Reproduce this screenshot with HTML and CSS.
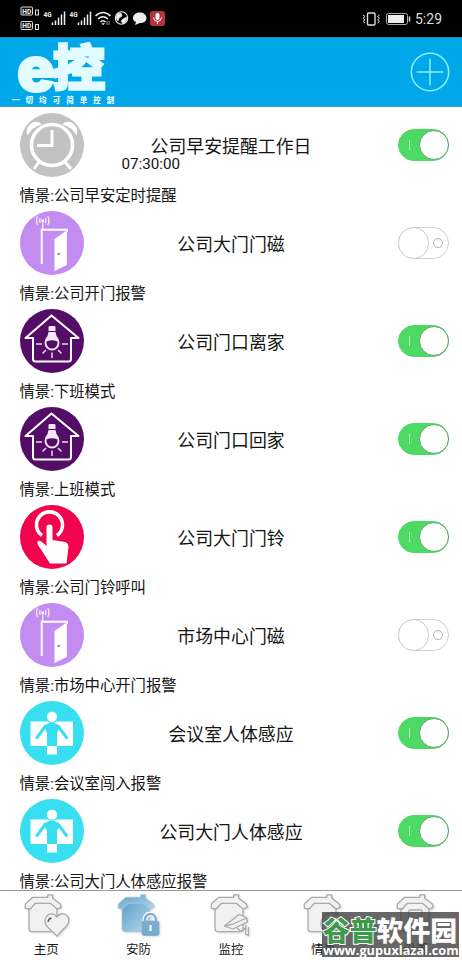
FILE: index.html
```html
<!DOCTYPE html>
<html lang="zh-CN">
<head>
<meta charset="utf-8">
<title>e控</title>
<link rel="stylesheet" href="styles.css">
</head>
<body>
<svg class="defs" width="0" height="0" aria-hidden="true">
  <defs>
    <linearGradient id="blue" x1="0" y1="0" x2="1" y2="1"><stop offset="0" stop-color="#5d9fc9"/><stop offset="1" stop-color="#b9d9eb"/></linearGradient>
    <symbol id="clock" viewBox="0 0 64 64">
      <circle cx="32" cy="32" r="32" fill="#c2c2c2"/>
      <path d="M7.500 22.500C5.500 18 7.500 13.500 10.500 11C13.500 8.200 18.500 7.500 21.500 11.500Q12 14 7.500 22.500ZM56.500 22.500C58.500 18 56.500 13.500 53.500 11C50.500 8.200 45.500 7.500 42.500 11.500Q52 14 56.500 22.500Z" fill="#fff"/>
      <circle cx="32" cy="32" r="20.500" fill="none" stroke="#fff" stroke-width="3.600"/>
      <path d="M32 17V32.500H17M19 49L14 56M45 49L51 56" fill="none" stroke="#fff" stroke-width="3"/>
    </symbol>
    <symbol id="door" viewBox="0 0 64 64">
      <circle cx="32" cy="32" r="32" fill="#c38cf0"/>
      <path d="M21.700 53V18.800H47V21" fill="none" stroke="#fff" stroke-width="2"/>
      <path d="M34.500 28L46.800 19.500V54L34.500 60Z" fill="#fff"/>
      <circle cx="38.700" cy="43" r="1.300" fill="#a77bc4"/>
      <path d="M22.700 18V11M20.200 7Q18.700 9.500 20.200 12M17.700 5Q15.200 9.500 17.700 14M25.200 7Q26.700 9.500 25.200 12M27.700 5Q30.200 9.500 27.700 14" fill="none" stroke="#f4e8fd" stroke-width="1.300"/>
      <circle cx="22.700" cy="9.500" r="1.500" fill="#fff"/>
    </symbol>
    <symbol id="house" viewBox="0 0 64 64">
      <circle cx="32" cy="32" r="32" fill="#540d67"/>
      <path d="M31.500 6.500L5.500 29H13V50Q13 52.500 15.500 52.500H48.500Q51 52.500 51 50V29H58.500Z" fill="none" stroke="#fff" stroke-width="2" stroke-linejoin="round"/>
      <path d="M28.500 22V18Q28.500 17 30 17H34Q35.500 17 35.500 18V22Z" fill="#f3e7f6"/>
      <path d="M28.500 23H35.500L36.500 27Q39.500 30 39.500 34A7.500 7.500 0 0 1 24.500 34Q24.500 30 27.500 27Z" fill="#f3e7f6"/>
      <path d="M26.500 32.500Q32 30 37.500 32.500V34A5.500 5.500 0 0 1 26.500 34Z" fill="#540d67"/>
      <path d="M16 35H22M42 35H48M22.500 44.500L26 41M41.500 44.500L38 41M32 43.500V49" stroke="#f0d5f1" stroke-width="1.500"/>
    </symbol>
    <symbol id="touch" viewBox="0 0 64 64">
      <circle cx="32" cy="32" r="32" fill="#f1044d"/>
      <path d="M22 30.500A13 13 0 1 1 37 30.500" fill="none" stroke="#fff" stroke-width="3.600"/>
      <path d="M26.500 22.500Q26.500 19.500 29.500 19.500T32.500 22.500V35L45 37Q48.500 38 48.500 42L46.500 58.500H30L20 43Q16 37.500 18 36Q20 34.500 26.500 41Z" fill="#fff"/>
    </symbol>
    <symbol id="person" viewBox="0 0 64 64">
      <circle cx="32" cy="32" r="32" fill="#37dff0"/>
      <path d="M10.500 20.500H53V45H10.500ZM27 45H37V53.500H27Z" fill="#fff"/>
      <path d="M25.500 25L17 36.500M38 25L46.500 36.500" stroke="#37dff0" stroke-width="3" stroke-linecap="round"/>
      <path d="M27 45V32L24 26Q27 21.500 31.500 21.500T40 26L37 32V45Z" fill="#37dff0"/>
      <circle cx="32" cy="15.700" r="5.600" fill="#fff" stroke="#37dff0"/>
    </symbol>
    <symbol id="home" viewBox="0 0 50 46">
      <path d="M5 14V34.500Q5 37.700 8.500 37.700H29.500Q33 37.700 33 34.500V14L26 9H12Z"/>
      <path d="M1.300 14.300V10L8.700 3.300H23.700V.8H28.700V4.300L36.300 10L37.300 13.300L33 15L26.300 9.300H11.300L6.300 15Z" stroke-linejoin="round"/>
    </symbol>
  </defs>
</svg>
<div class="app">
  <div class="status">
    <svg class="status-left" width="170" height="36" viewBox="0 0 170 36">
      <g fill="#111" stroke="#ddd"><rect x="21" y="7" width="11.500" height="8" rx="1"/><rect x="21" y="21.500" width="11.500" height="8" rx="1"/><rect x="35.500" y="10" width="3" height="5"/><rect x="35.500" y="24.500" width="3" height="5"/></g>
      <g class="tiny"><text x="22.300" y="13.600">HD</text><text x="22.300" y="28.100">HD</text><text x="43.500" y="17">4G</text><text x="69.500" y="17">4G</text></g>
      <path d="M52.500 25V22.500M55.500 25V20.500M58.500 25V17.500M61.500 25V14.500M64.500 25V11.500M78.500 25V22.500M81.500 25V20.500M84.500 25V17.500M87.500 25V14.500M90.500 25V11.500" stroke="#eee" stroke-width="1.500"/>
      <g fill="none" stroke="#eee" stroke-width="1.600"><path d="M95.500 16Q103 9 110.500 16M98 19Q103 14.500 108 19M100.500 22Q103 19.500 105.500 22"/><circle cx="121.500" cy="18" r="6.200" stroke-width="1.100"/></g>
      <path d="M102 23.500L103.200 25L104.500 23.500ZM107 21V25M109 21V25M117 14L121 13L122 16L119 18L118 21L116 18ZM123 19L127 17L126 21L123 24L121 21Z" fill="#eee" stroke="#eee" stroke-width=".6"/>
      <path d="M139.500 12.500C144 12.500 146.500 15 146.500 18C146.500 21 144 23 140 23L135 25L136 22C134 21 133 20 133 18C133 15 135.500 12.500 139.500 12.500Z" fill="#eee"/>
      <rect x="150" y="11" width="15" height="15" rx="3" fill="#b8313d"/><rect x="155.500" y="13" width="4" height="7" rx="2" fill="#fff"/><path d="M153.500 17.500Q154 21.500 157.500 21.500T161.500 17.500M157.500 21.500V24" stroke="#fff" fill="none"/>
    </svg>
    <div class="status-right">
      <svg width="50" height="16" viewBox="0 0 50 16"><rect x="5.500" y="2" width="7.500" height="12" rx="1" fill="none" stroke="#ddd" stroke-width="1.400"/><path d="M1 4L3 5.500L1 7.200L3 9L1 10.500L3 12M17.500 4L15.500 5.500L17.500 7.200L15.500 9L17.500 10.500L15.500 12" fill="none" stroke="#ddd"/><rect x="24.500" y="2.500" width="21" height="11" rx="2" fill="none" stroke="#aaa"/><rect x="26" y="4" width="16" height="8" fill="#eee"/><path d="M47.500 5.500V10.500" stroke="#ddd" stroke-width="1.500"/></svg>
      <span>5:29</span>
    </div>
  </div>
  <header class="header">
    <div class="brand"><div class="logo"><span class="logo-e">e</span><span class="logo-k">控</span></div><div class="slogan">一切均可简单控制</div></div>
    <svg width="40" height="40" viewBox="0 0 40 40" fill="none" stroke="#8cf0ff" stroke-width="1.500"><circle cx="20" cy="20" r="18.700"/><path d="M6.500 20H33.500M20 6.500V33.500"/></svg>
  </header>
  <main class="list">
    <section class="row"><div class="main"><svg class="icon"><use href="#clock"/></svg><div class="title">公司早安提醒工作日<span class="time">07:30:00</span></div><div class="switch on"></div></div><p>情景:公司早安定时提醒</p></section>
    <section class="row"><div class="main"><svg class="icon"><use href="#door"/></svg><div class="title">公司大门门磁</div><div class="switch"></div></div><p>情景:公司开门报警</p></section>
    <section class="row"><div class="main"><svg class="icon"><use href="#house"/></svg><div class="title">公司门口离家</div><div class="switch on"></div></div><p>情景:下班模式</p></section>
    <section class="row"><div class="main"><svg class="icon"><use href="#house"/></svg><div class="title">公司门口回家</div><div class="switch on"></div></div><p>情景:上班模式</p></section>
    <section class="row"><div class="main"><svg class="icon"><use href="#touch"/></svg><div class="title">公司大门门铃</div><div class="switch on"></div></div><p>情景:公司门铃呼叫</p></section>
    <section class="row"><div class="main"><svg class="icon"><use href="#door"/></svg><div class="title">市场中心门磁</div><div class="switch"></div></div><p>情景:市场中心开门报警</p></section>
    <section class="row"><div class="main"><svg class="icon"><use href="#person"/></svg><div class="title">会议室人体感应</div><div class="switch on"></div></div><p>情景:会议室闯入报警</p></section>
    <section class="row"><div class="main"><svg class="icon"><use href="#person"/></svg><div class="title">公司大门人体感应</div><div class="switch on"></div></div><p>情景:公司大门人体感应报警</p></section>
  </main>
  <nav class="tabs">
    <div class="tab"><svg class="tab-icon" viewBox="0 0 50 46"><use href="#home"/><path d="M33 42L23 32.500C16.500 24 27 15 33 23C38 15 50 23 42.500 32Z"/><path d="M24 28Q24.500 24.500 27.500 24" fill="none" stroke="#555"/></svg><span>主页</span></div>
    <div class="tab active"><svg class="tab-icon" viewBox="0 0 50 46"><use href="#home"/><path d="M28 27V25.500A5.500 5.500 0 0 1 39 25.500V27" fill="none" stroke="#fff" stroke-width="5"/><path d="M28 27V25.500A5.500 5.500 0 0 1 39 25.500V27" fill="none" stroke="#86aec9" stroke-width="2.500"/><rect x="25" y="27" width="17" height="14.500" rx="2" fill="#78acd0" stroke="#86aec9"/><path d="M33.500 31V37" stroke="#fff" stroke-width="2.200"/></svg><span>安防</span></div>
    <div class="tab"><svg class="tab-icon" viewBox="0 0 50 46"><use href="#home"/><path d="M14.500 32L29 20.500L36.500 23.500L37.500 28L23 35Z" stroke-linejoin="round"/><path d="M14.500 32L22 30.500L36.500 24M27 34L31 37.500L35.500 34M36 31L35.500 40L38.500 41.500V33" fill="none"/></svg><span>监控</span></div>
    <div class="tab"><svg class="tab-icon" viewBox="0 0 50 46"><use href="#home"/><circle cx="29" cy="30" r="11"/></svg><span>情景</span></div>
    <div class="tab"><svg class="tab-icon" viewBox="0 0 50 46"><use href="#home"/><rect x="13" y="16" width="13" height="18" rx="1"/></svg><span>设置</span></div>
  </nav>
  <div class="mark"><div class="mark-name"><b>谷普</b>软件园</div><div class="mark-url">www.gupuxlazal.com</div></div>
</div>
</body>
</html>
```
FILE: styles.css
```css
*, *::before, *::after { box-sizing: border-box; }
body { margin: 0; background: #fff; color: #151515; font-family: Roboto, "Noto Sans CJK SC", sans-serif; }
.defs { position: absolute; }
.app { position: relative; width: 462px; height: 960px; overflow: hidden; display: flex; flex-direction: column; }
.status { height: 37px; flex: none; background: #000; display: flex; justify-content: space-between; }
.status-right { display: flex; align-items: center; gap: 3px; padding-right: 20px; color: #ddd; font-size: 14px; }
.tiny { font: 700 6.5px Roboto, sans-serif; fill: #eee; }
.header { height: 70px; flex: none; background: #00a8ea; border-bottom: 1px solid #3f9dbd; border-top: 1px solid #1689b7; display: flex; justify-content: space-between; align-items: center; padding: 0 12px; }
.brand { color: #e2fbff; height: 68px; }
.logo { height: 56px; display: flex; padding-left: 5px; }
.logo-e { font: 900 62px/61px Inter, sans-serif; width: 36px; -webkit-text-stroke: 2px #e2fbff; }
.logo-k { font: 900 52px/54px "Noto Sans CJK SC", sans-serif; -webkit-text-stroke: 3px #e2fbff; transform: scale(1, .95); transform-origin: 50% 40%; }
.slogan { font: 900 7.5px/12px "Noto Sans CJK SC", sans-serif; letter-spacing: 6.05px; white-space: nowrap; }
.list { height: 784px; flex: none; overflow: hidden; }
.row { height: 98px; padding: 6px 13px 0 19.5px; }
.main { height: 64px; display: grid; grid-template-columns: 64px 295px 51px; align-items: center; }
.main .switch { margin-left: 19.5px; }
.icon { width: 64px; height: 64px; display: block; }
.title { position: relative; font-size: 17.9px; line-height: 26px; text-align: center; white-space: nowrap; padding-top: 3px; }
.time { position: absolute; left: 38px; top: 23px; font-size: 15.2px; line-height: 20px; }
.row p { margin: 8px 0 0; font-size: 15.35px; line-height: 22px; white-space: nowrap; }
.switch { position: relative; width: 51px; height: 32px; border-radius: 16px; border: 1px solid #d2d2d2; background: #fff; }
.switch::before { content: ""; position: absolute; left: -1px; top: -1px; width: 31px; height: 32px; border-radius: 16px; border: 1px solid #ccc; background: #fff; }
.switch::after { content: ""; position: absolute; right: 5px; top: 10px; width: 10px; height: 10px; border: 1px solid #b0b0b0; border-radius: 50%; }
.switch.on { background: #4cd964; border-color: #4cd964; }
.switch.on::before { left: 19.5px; top: 0; width: 30px; height: 30px; border-color: #55a468; }
.switch.on::after { left: 10px; top: 10px; width: 1px; height: 10px; border: 0; border-radius: 0; background: #c5f7c9; }
.tabs { flex: none; height: 70px; border-top: 1px solid #999; background: #fff; display: grid; grid-template-columns: repeat(5, 1fr); position: relative; margin-top: -1px; }
.tab { display: flex; flex-direction: column; align-items: center; font-size: 12.5px; line-height: 20px; }
.tab-icon { width: 50px; height: 46px; margin: 3px 0 0 5px; fill: #f1f1f1; stroke: #aaa; stroke-width: 1.3px; filter: drop-shadow(1px 1px 1px #ddd); }
.tab:nth-child(2) .tab-icon { margin-left: 6px; }
.tab:nth-child(3) .tab-icon, .tab:nth-child(4) .tab-icon { margin-left: 9px; }
.tab:nth-child(5) .tab-icon { margin-left: 11px; }
.active .tab-icon { fill: url(#blue); stroke: #9fc4da; stroke-width: .8px; }
.mark { position: absolute; left: 322px; top: 912px; width: 137px; height: 45px; background: rgba(65, 65, 65, .8); color: #fff; white-space: nowrap; }
.mark-name { font: 900 26.8px/35px "Noto Sans CJK SC", sans-serif; height: 29px; padding-left: 1px; }
.mark-name b { color: #3d9a4a; font-weight: 900; -webkit-text-stroke: 2px #fff; paint-order: stroke fill; }
.mark-url { font: 700 12.75px/18px "Open Sans", sans-serif; padding-left: 1px; }
```
